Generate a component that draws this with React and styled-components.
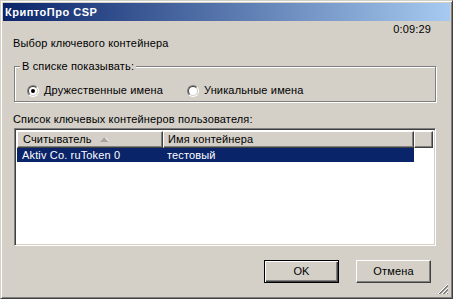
import React from "react";
import styled, { createGlobalStyle } from "styled-components";

const Global = createGlobalStyle`
  html, body { margin: 0; padding: 0; background: #d4d0c8; }
  body { font-family: "Liberation Sans", Arial, sans-serif; font-size: 11px; line-height: 13px; color: #000; letter-spacing: 0.15px; }
  * { box-sizing: border-box; }
`;

const Window = styled.div`
  position: relative;
  width: 453px;
  height: 299px;
  border: 1px solid;
  border-color: #d4d0c8 #404040 #404040 #d4d0c8;
  box-shadow: inset 1px 1px 0 #fff, inset -1px -1px 0 #808080;
  padding: 2px;
  background: #d4d0c8;
  display: flex;
  flex-direction: column;
`;

const TitleBar = styled.div`
  height: 18px;
  flex: none;
  background: linear-gradient(to right, #0a246a, #a6caf0);
  color: #fff;
  font-weight: bold;
  font-size: 11px;
  letter-spacing: 0.5px;
  line-height: 18px;
  padding-left: 2px;
`;

const Body = styled.div`
  flex: 1;
  display: flex;
  flex-direction: column;
`;

const Timer = styled.div`
  margin-top: 2px;
  text-align: right;
  padding-right: 19px;
`;

const Heading = styled.div`
  margin-top: 1px;
  padding-left: 10px;
`;

const GroupBox = styled.div`
  position: relative;
  margin: 16px 0 0 11px;
  width: 422px;
  height: 36px;
  border: 1px solid #808080;
  box-shadow: inset 1px 1px 0 #fff, 1px 1px 0 #fff;
  padding: 13px 0 0 12px;
  display: flex;
  align-items: center;
`;

const Legend = styled.span`
  position: absolute;
  top: -7px;
  left: 5px;
  padding: 0 2px;
  background: #d4d0c8;
`;

const Option = styled.label`
  display: flex;
  align-items: center;
  gap: 5px;
  width: ${(p) => p.$w || "auto"};
  height: 12px;
`;

const RadioOuter = styled.span`
  width: 12px;
  height: 12px;
  border-radius: 50%;
  border: 1px solid;
  border-color: #808080 #fff #fff #808080;
  display: flex;
  flex: none;
`;

const RadioInner = styled.span`
  flex: 1;
  border-radius: 50%;
  border: 1px solid;
  border-color: #404040 #d4d0c8 #d4d0c8 #404040;
  background: #fff;
  display: flex;
  align-items: center;
  justify-content: center;
`;

const Dot = styled.span`
  width: 4px;
  height: 4px;
  border-radius: 50%;
  background: #000;
`;

const SectionLabel = styled.div`
  margin-top: 11px;
  padding-left: 10px;
`;

const ListView = styled.div`
  margin: 2px 0 0 11px;
  width: 422px;
  height: 118px;
  border: 1px solid;
  border-color: #808080 #fff #fff #808080;
  box-shadow: inset 1px 1px 0 #404040, inset -1px -1px 0 #d4d0c8;
  padding: 2px;
  background: #fff;
  display: flex;
  flex-direction: column;
`;

const Header = styled.div`
  display: flex;
  height: 17px;
  flex: none;
`;

const HeaderCell = styled.div`
  width: ${(p) => p.$w};
  flex: ${(p) => (p.$fill ? 1 : "none")};
  background: #d4d0c8;
  border: 1px solid;
  border-color: #fff #404040 #404040 #fff;
  box-shadow: inset -1px -1px 0 #808080;
  padding-left: ${(p) => p.$pad || "5px"};
  display: flex;
  align-items: center;
  gap: 8px;
  white-space: nowrap;
`;

const Row = styled.div`
  display: flex;
  height: 14px;
  width: 397px;
  background: ${(p) => (p.$selected ? "#0a246a" : "transparent")};
  color: ${(p) => (p.$selected ? "#fff" : "#000")};
`;

const Cell = styled.div`
  width: ${(p) => p.$w};
  padding-left: ${(p) => p.$pad};
  line-height: 14px;
  white-space: nowrap;
`;

const ButtonRow = styled.div`
  margin-top: 14px;
  display: flex;
  justify-content: flex-end;
  gap: 17px;
  padding-right: 19px;
`;

const Button = styled.button`
  width: 75px;
  height: 23px;
  font: inherit;
  letter-spacing: inherit;
  color: #000;
  background: #d4d0c8;
  padding: 0;
  border: 1px solid;
  border-color: ${(p) => (p.$default ? "#000" : "#fff #404040 #404040 #fff")};
  box-shadow: ${(p) =>
    p.$default
      ? "inset 1px 1px 0 #fff, inset -1px -1px 0 #404040, inset -2px -2px 0 #808080"
      : "inset -1px -1px 0 #808080"};
`;

const Grip = styled.svg`
  position: absolute;
  right: 3px;
  bottom: 3px;
`;

function Radio({ checked }) {
  return (
    <RadioOuter>
      <RadioInner>{checked && <Dot />}</RadioInner>
    </RadioOuter>
  );
}

export default function App() {
  return (
    <>
      <Global />
      <Window>
        <TitleBar>КриптоПро CSP</TitleBar>
        <Body>
          <Timer>0:09:29</Timer>
          <Heading>Выбор ключевого контейнера</Heading>
          <GroupBox>
            <Legend>В списке показывать:</Legend>
            <Option $w="160px">
              <Radio checked />
              Дружественные имена
            </Option>
            <Option>
              <Radio />
              Уникальные имена
            </Option>
          </GroupBox>
          <SectionLabel>Список ключевых контейнеров пользователя:</SectionLabel>
          <ListView>
            <Header>
              <HeaderCell $w="146px" $pad="5px">
                Считыватель
                <svg width="9" height="5" viewBox="0 0 9 5">
                  <polygon points="4.5,0 9,5 0,5" fill="#a8a49c" />
                  <line x1="5" y1="0.5" x2="9" y2="4.5" stroke="#fff" strokeWidth="1" />
                </svg>
              </HeaderCell>
              <HeaderCell $w="251px" $pad="4px">Имя контейнера</HeaderCell>
              <HeaderCell $fill />
            </Header>
            <Row $selected>
              <Cell $w="146px" $pad="5px">Aktiv Co. ruToken 0</Cell>
              <Cell $w="251px" $pad="4px">тестовый</Cell>
            </Row>
          </ListView>
          <ButtonRow>
            <Button $default>OK</Button>
            <Button>Отмена</Button>
          </ButtonRow>
        </Body>
        <Grip width="12" height="12" viewBox="0 0 12 12">
          <g strokeWidth="1">
            <line x1="11" y1="1" x2="1" y2="11" stroke="#fff" />
            <line x1="11" y1="2" x2="2" y2="11" stroke="#808080" />
            <line x1="11" y1="3" x2="3" y2="11" stroke="#808080" />
            <line x1="11" y1="5" x2="5" y2="11" stroke="#fff" />
            <line x1="11" y1="6" x2="6" y2="11" stroke="#808080" />
            <line x1="11" y1="7" x2="7" y2="11" stroke="#808080" />
            <line x1="11" y1="9" x2="9" y2="11" stroke="#fff" />
            <line x1="11" y1="10" x2="10" y2="11" stroke="#808080" />
          </g>
        </Grip>
      </Window>
    </>
  );
}
